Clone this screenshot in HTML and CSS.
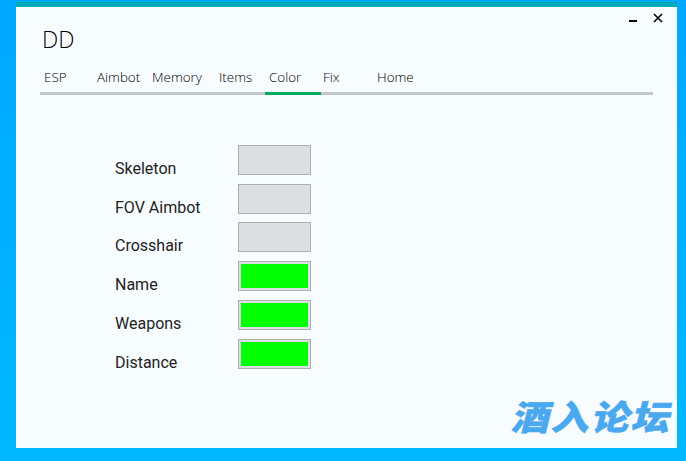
FILE: index.html
```html
<!DOCTYPE html>
<html lang="en">
<head>
  <meta charset="UTF-8" />
  <title>DD</title>
  <link rel="stylesheet" href="styles.css">
</head>
<body>
  <div class="window">
    <div class="window-buttons">
      <svg class="min-icon" width="8" height="2" viewBox="0 0 8 2"><rect width="8" height="2" fill="#000"/></svg>
      <svg class="close-icon" width="10" height="10" viewBox="0 0 10 10"><path d="M1 1L9 9M9 1L1 9" stroke="#000" stroke-width="1.6" fill="none"/></svg>
    </div>
    <h1 class="title">DD</h1>
    <div class="tabs">
      <div class="tab">ESP</div>
      <div class="tab">Aimbot</div>
      <div class="tab">Memory</div>
      <div class="tab">Items</div>
      <div class="tab active">Color</div>
      <div class="tab">Fix</div>
      <div class="tab">Home</div>
    </div>
    <div class="color-list">
      <div class="label">Skeleton</div>
      <div class="swatch"></div>
      <div class="label">FOV Aimbot</div>
      <div class="swatch"></div>
      <div class="label">Crosshair</div>
      <div class="swatch"></div>
      <div class="label">Name</div>
      <div class="swatch green"></div>
      <div class="label">Weapons</div>
      <div class="swatch green"></div>
      <div class="label">Distance</div>
      <div class="swatch green"></div>
    </div>
    <div class="watermark">酒入论坛</div>
  </div>
</body>
</html>
```

FILE: styles.css
```css
html, body {
  height: 100%;
}

body {
  margin: 0;
  padding: 2px 9px 13px 16px;
  box-sizing: border-box;
  background: linear-gradient(180deg, #00a8ff 0%, #00b8ff 100%);
  font-family: "Open Sans", Arial, sans-serif;
  overflow: hidden;
}

.window {
  position: relative;
  height: 100%;
  box-sizing: border-box;
  background-color: #f7fcff;
  border-top: 5px solid #00abb8;
  padding: 0 24px 0 24px;
}

.window-buttons {
  position: absolute;
  top: 6px;
  right: 14px;
  display: flex;
  align-items: flex-start;
  gap: 16px;
}

.min-icon {
  margin-top: 7px;
}

.title {
  margin: 0;
  padding: 16px 0 0 2px;
  font-size: 23px;
  line-height: 32px;
  font-weight: 300;
  color: #000;
}

.tabs {
  display: grid;
  grid-template-columns: 53px 55px 67px 50px 54px 54px 1fr;
  margin-top: 8px;
  border-bottom: 3px solid #c3c9cc;
}

.tab {
  height: 29px;
  line-height: 28px;
  padding-left: 4px;
  font-size: 13.4px;
  font-weight: 300;
  color: #000;
}

.active {
  position: relative;
}

.active::after {
  content: "";
  position: absolute;
  left: 0;
  right: -2px;
  bottom: -3px;
  height: 3px;
  background-color: #00ab60;
}

.color-list {
  display: grid;
  grid-template-columns: 123px 73px;
  grid-auto-rows: 30px;
  row-gap: 8.75px;
  margin: 49.9px 0 0 75px;
}

.label {
  font-family: Roboto, Arial, sans-serif;
  font-size: 16px;
  line-height: 20px;
  padding-top: 14px;
  color: #222;
}

.swatch {
  box-sizing: border-box;
  border: 1px solid #adb0b3;
  background-color: #dbdfe2;
}

.green {
  background-color: #00ff00;
  border: 1px solid #adb0b3;
  box-shadow: inset 0 0 0 2px #dbdfe2;
}

.watermark {
  position: absolute;
  right: 3px;
  bottom: 8px;
  font-family: "Noto Sans CJK SC", sans-serif;
  font-size: 38px;
  line-height: 48px;
  font-weight: 900;
  letter-spacing: 2px;
  color: #4aa8ee;
  -webkit-text-stroke: 0.6px #4aa8ee;
  transform: skewX(-14deg) scaleY(0.9);
}
```
